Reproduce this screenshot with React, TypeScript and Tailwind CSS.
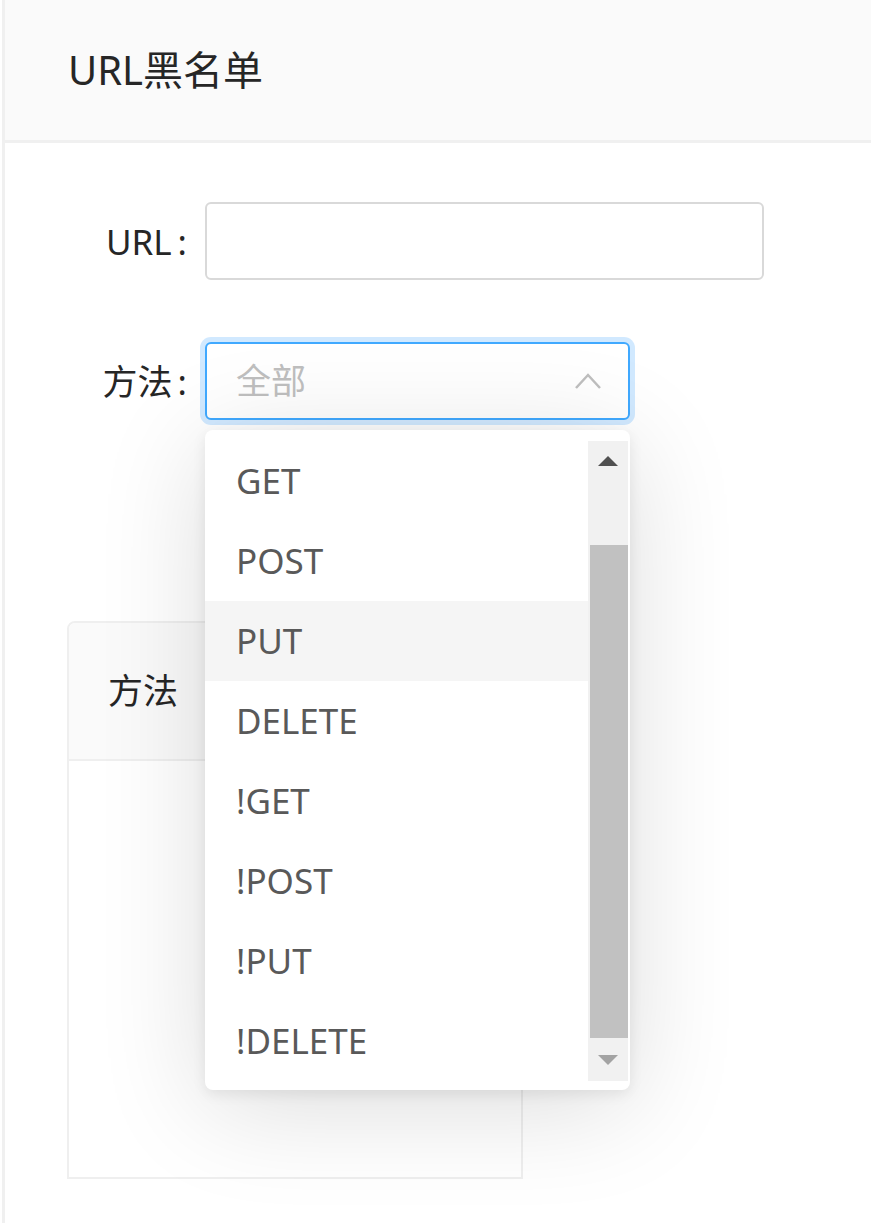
import React from "react";

const items = ["GET", "POST", "PUT", "DELETE", "!GET", "!POST", "!PUT", "!DELETE"];

export default function App() {
  return (
    <div
      className="relative w-[871px] h-[1223px] overflow-hidden bg-white pl-[2px]"
      style={{ fontFamily: '"Noto Sans", "Noto Sans CJK SC", sans-serif' }}
    >
      <div className="h-full border-l-[3px] border-[#f0f0f0]">
        <div className="flex h-[143px] items-center border-b-[3px] border-[#f0f0f0] bg-[#fafafa] pl-[63px] text-[40px] text-[#262626]">
          URL黑名单
        </div>
        <div className="pt-[59px]">
          <div className="flex items-center">
            <div className="w-[200px] pr-[18px] text-right text-[35px] leading-none text-[#262626]">
              URL<span className="ml-[6px]">:</span>
            </div>
            <div className="h-[78px] w-[559px] rounded-[6px] border-2 border-[#d9d9d9] bg-white" />
          </div>
          <div className="mt-[62px] flex items-center">
            <div className="w-[200px] pr-[18px] text-right text-[35px] leading-none text-[#262626]">
              方法<span className="ml-[5px]">:</span>
            </div>
            <div className="flex h-[78px] w-[425px] items-center justify-between rounded-[6px] border-2 border-[#40a9ff] bg-white pl-[29px] pr-[26px] shadow-[0_0_0_5px_rgba(24,144,255,0.2)]">
              <span className="text-[35px] text-[#bfbfbf]">全部</span>
              <svg width="28" height="18" viewBox="0 0 28 18" fill="none">
                <path d="M2 16 L14 3 L26 16" stroke="#bfbfbf" strokeWidth="2.5" />
              </svg>
            </div>
          </div>
          <div className="ml-[62px] mt-[201px] h-[558px] w-[456px] rounded-t-[8px] border-2 border-[#efefef]">
            <div className="flex h-[138px] items-center rounded-t-[6px] border-b-2 border-[#efefef] bg-[#fafafa] pl-[39px] text-[35px] text-[#262626]">
              方法
            </div>
          </div>
        </div>
      </div>

      <div className="absolute left-[205px] top-[430px] flex h-[660px] w-[425px] rounded-[8px] bg-white pb-[9px] pr-[2px] pt-[11px] shadow-[0_16px_110px_rgba(0,0,0,0.14),0_4px_14px_rgba(0,0,0,0.08)]">
        <div className="flex-1">
          {items.map((it) => (
            <div
              key={it}
              className={`flex h-[80px] items-center pl-[31px] text-[35px] text-[#595959] ${it === "PUT" ? "bg-[#f5f5f5]" : ""}`}
            >
              {it}
            </div>
          ))}
        </div>
        <div className="flex w-[40px] flex-col bg-[#f1f1f1]">
          <div className="flex h-[40px] items-center justify-center">
            <svg width="20" height="10" viewBox="0 0 20 10">
              <path d="M0 10 L10 0 L20 10 Z" fill="#505050" />
            </svg>
          </div>
          <div className="h-[64px]" />
          <div className="ml-[2px] h-[493px] bg-[#c1c1c1]" />
          <div className="flex flex-1 items-center justify-center">
            <svg width="20" height="10" viewBox="0 0 20 10">
              <path d="M0 0 L20 0 L10 10 Z" fill="#a3a3a3" />
            </svg>
          </div>
        </div>
      </div>
    </div>
  );
}
